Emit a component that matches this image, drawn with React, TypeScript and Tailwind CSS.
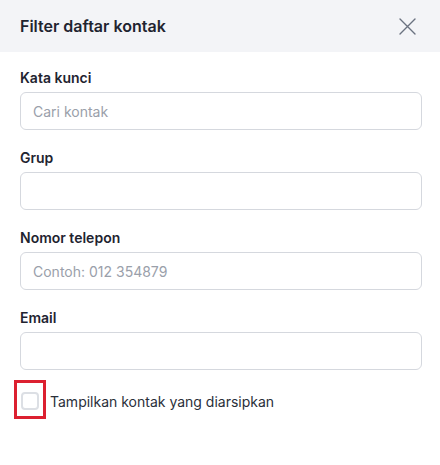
import React, { FC } from "react";

type FieldProps = {
  label: string;
  placeholder?: string;
};

const Field: FC<FieldProps> = ({ label, placeholder }) => {
  return (
    <div className="flex flex-col mb-[18px]">
      <label className="text-sm font-semibold leading-5 text-[#1f2430] mb-1">
        {label}
      </label>
      <input
        className="h-[38px] w-full rounded-md border border-[#d5d8de] bg-white px-3 text-sm text-gray-700 placeholder:text-[#9aa0aa] outline-none"
        placeholder={placeholder}
      />
    </div>
  );
};

const App: FC = () => {
  return (
    <div
      className="w-[440px] h-[465px] bg-white"
      style={{ fontFamily: "Inter, 'Noto Sans', sans-serif" }}
    >
      {/* Header */}
      <div className="flex items-center justify-between h-[52px] bg-[#f3f4f7] pl-5 pr-[22px]">
        <h2 className="text-base font-semibold text-[#1f2430]">
          Filter daftar kontak
        </h2>
        <button className="p-0.5 text-[#6b7280]">
          <svg width="17" height="17" viewBox="0 0 17 17" fill="none">
            <path
              d="M1 1L16 16M16 1L1 16"
              stroke="currentColor"
              strokeWidth="1.4"
              strokeLinecap="round"
            />
          </svg>
        </button>
      </div>

      {/* Form */}
      <div className="pt-4 pl-5 pr-[18px]">
        <Field label="Kata kunci" placeholder="Cari kontak" />
        <Field label="Grup" />
        <Field label="Nomor telepon" placeholder="Contoh: 012 354879" />
        <Field label="Email" />

        {/* Archived toggle */}
        <div className="flex items-center -mt-2 -ml-1.5">
          <span className="flex border-[3px] border-[#dc2030] px-1 pt-[9px] pb-[6px]">
            <span className="block w-[18px] h-[18px] rounded-[4px] border-2 border-[#dcdfe4] bg-white" />
          </span>
          <span className="ml-1 mt-[5px] text-sm text-[#2a2f3a]">
            Tampilkan kontak yang diarsipkan
          </span>
        </div>
      </div>
    </div>
  );
};

export default App;
